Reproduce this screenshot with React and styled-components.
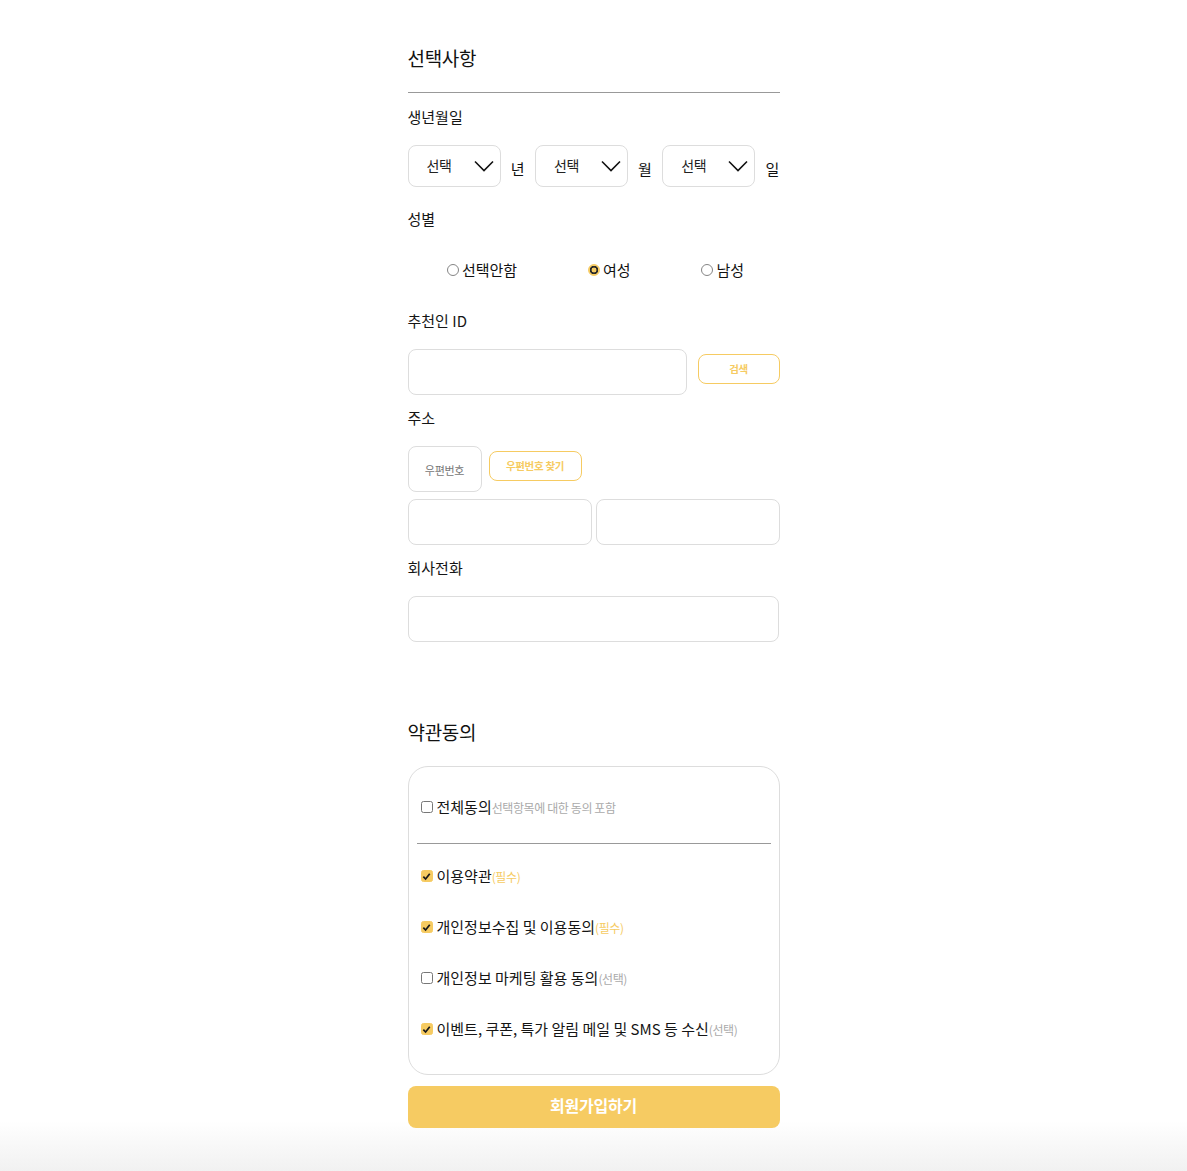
import styled, { createGlobalStyle } from "styled-components";

const YELLOW = "#F6CB62";

const GlobalStyle = createGlobalStyle`
	body {
		margin: 0;
		font-family: "Noto Sans CJK KR", "Noto Sans", sans-serif;
		color: #111;
		background: #fff;
	}
	* { box-sizing: border-box; }
`;

const Page = styled.div`
	min-height: 100vh;
	background: linear-gradient(to bottom, #fff 0, #fff calc(100% - 50px), #f1f1f1 100%);
`;

const Container = styled.div`
	width: 372px;
	margin: 0 auto;
	padding: 43px 0 43px;
	display: flex;
	flex-direction: column;
`;

const SectionTitle = styled.h2`
	margin: ${(p) => p.$mt || 0}px 0 0;
	font-size: 19px;
	font-weight: 400;
	letter-spacing: -0.3px;
	line-height: 30px;
	padding-bottom: ${(p) => (p.$line ? 19 : 0)}px;
	border-bottom: ${(p) => (p.$line ? "1px solid #999" : "none")};
`;

const Label = styled.div`
	margin-top: ${(p) => p.$mt || 0}px;
	font-size: 15px;
	line-height: 24px;
	color: #151515;
`;

const DateRow = styled.div`
	margin-top: 16px;
	display: flex;
	align-items: center;
	justify-content: space-between;
`;

const SelectBox = styled.div`
	width: 93px;
	height: 42px;
	border: 1px solid #ddd;
	border-radius: 8px;
	display: flex;
	align-items: center;
	justify-content: space-between;
	padding: 0 6px 2px 18px;
	font-size: 14px;
	letter-spacing: -0.3px;
	color: #222;

	svg {
		margin-top: 2px;
	}
`;

const Unit = styled.span`
	font-size: 15px;
	line-height: 24px;
	padding-top: 5px;
	width: 14px;
`;

const RadioRow = styled.div`
	padding: 27px 0 27px 4px;
	display: flex;
	justify-content: space-around;
	align-items: center;
`;

const RadioItem = styled.label`
	display: flex;
	align-items: center;
	gap: 3px;
	font-size: 15px;
	line-height: 24px;
`;

const RadioDot = styled.span`
	width: 12px;
	height: 12px;
	border-radius: 50%;
	border: 1px solid ${(p) => (p.$checked ? YELLOW : "#858585")};
	background: ${(p) =>
		p.$checked
			? `radial-gradient(circle, ${YELLOW} 0 2.2px, #2a2a2a 2.7px 4px, ${YELLOW} 4.5px)`
			: "#fff"};
`;

const FieldRow = styled.div`
	margin-top: ${(p) => p.$mt || 0}px;
	display: flex;
	align-items: flex-start;
	gap: ${(p) => p.$gap || 0}px;
`;

const TextInput = styled.div`
	flex: ${(p) => (p.$w ? "none" : 1)};
	width: ${(p) => (p.$w ? `${p.$w}px` : "auto")};
	height: 46px;
	border: 1px solid #ddd;
	border-radius: 8px;
	background: #fff;
`;

const PostBox = styled.div`
	width: 74px;
	height: 46px;
	border: 1px solid #ddd;
	border-radius: 8px;
	display: flex;
	align-items: center;
	justify-content: center;
	font-size: 11px;
	letter-spacing: -0.3px;
	color: #777;
	padding-top: 2px;
`;

const OutlineButton = styled.button`
	margin-top: 5px;
	width: ${(p) => p.$w}px;
	height: 30px;
	border: 1px solid ${YELLOW};
	border-radius: 8px;
	background: #fff;
	color: ${YELLOW};
	font-family: inherit;
	font-size: 10.5px;
	font-weight: 700;
	letter-spacing: -0.3px;
	padding: 0 0 2px;
`;

const AgreeBox = styled.div`
	margin-top: 19px;
	border: 1px solid #ddd;
	border-radius: 20px;
	padding: 28px 8px 33px;
`;

const AgreeRow = styled.label`
	height: 24px;
	display: flex;
	align-items: center;
	padding: 0 4px;
	font-size: 15px;
	line-height: 24px;
	color: #151515;
`;

const Divider = styled.div`
	margin: 24px 0 20px;
	height: 1px;
	background: #999;
`;

const AgreeList = styled.div`
	display: flex;
	flex-direction: column;
	gap: 27px;
`;

const CheckBox = styled.span`
	flex: none;
	width: 12px;
	height: 12px;
	margin-right: 4px;
	border-radius: 2.5px;
	border: 1px solid ${(p) => (p.$checked ? YELLOW : "#777")};
	background: ${(p) => (p.$checked ? YELLOW : "#fff")};
	display: flex;
	align-items: center;
	justify-content: center;
`;

const Note = styled.span`
	font-size: 12px;
	line-height: 24px;
	letter-spacing: -0.4px;
	color: ${(p) => (p.$tone === "req" ? YELLOW : "#aaa")};
	padding-top: 1px;
`;

const SubmitButton = styled.button`
	margin-top: 11px;
	height: 42px;
	border: none;
	border-radius: 8px;
	background: ${YELLOW};
	color: #fff;
	font-family: inherit;
	font-size: 16px;
	font-weight: 700;
	letter-spacing: -0.2px;
	padding: 0 0 5px;
`;

function Chevron() {
	return (
		<svg width='20' height='12' viewBox='0 0 20 12'>
			<polyline
				points='1,1.5 10,10.5 19,1.5'
				fill='none'
				stroke='#111'
				strokeWidth='1.6'
			/>
		</svg>
	);
}

function Check({ checked }) {
	return (
		<CheckBox $checked={checked}>
			{checked && (
				<svg width='9' height='9' viewBox='0 0 10 10'>
					<polyline
						points='1.5,5.2 4,7.8 8.6,2'
						fill='none'
						stroke='#1a1a1a'
						strokeWidth='1.9'
					/>
				</svg>
			)}
		</CheckBox>
	);
}

const terms = [
	{ text: "이용약관", note: "(필수)", tone: "req", checked: true },
	{ text: "개인정보수집 및 이용동의", note: "(필수)", tone: "req", checked: true },
	{ text: "개인정보 마케팅 활용 동의", note: "(선택)", tone: "opt", checked: false },
	{
		text: "이벤트, 쿠폰, 특가 알림 메일 및 SMS 등 수신",
		note: "(선택)",
		tone: "opt",
		checked: true,
	},
];

const genders = [
	{ label: "선택안함", checked: false },
	{ label: "여성", checked: true },
	{ label: "남성", checked: false },
];

export default function App() {
	return (
		<Page>
			<GlobalStyle />
			<Container>
				<SectionTitle $line>선택사항</SectionTitle>

				<Label $mt={12}>생년월일</Label>
				<DateRow>
					<SelectBox>
						선택
						<Chevron />
					</SelectBox>
					<Unit>년</Unit>
					<SelectBox>
						선택
						<Chevron />
					</SelectBox>
					<Unit>월</Unit>
					<SelectBox>
						선택
						<Chevron />
					</SelectBox>
					<Unit>일</Unit>
				</DateRow>

				<Label $mt={20}>성별</Label>
				<RadioRow>
					{genders.map((g) => (
						<RadioItem key={g.label}>
							<RadioDot $checked={g.checked} />
							{g.label}
						</RadioItem>
					))}
				</RadioRow>

				<Label>추천인 ID</Label>
				<FieldRow $mt={16} $gap={11}>
					<TextInput $w={279} />
					<OutlineButton $w={82}>검색</OutlineButton>
				</FieldRow>

				<Label $mt={11}>주소</Label>
				<FieldRow $mt={16} $gap={7}>
					<PostBox>우편번호</PostBox>
					<OutlineButton $w={93}>우편번호 찾기</OutlineButton>
				</FieldRow>
				<FieldRow $mt={7} $gap={4}>
					<TextInput />
					<TextInput />
				</FieldRow>

				<Label $mt={11}>회사전화</Label>
				<FieldRow $mt={16}>
					<TextInput $w={371} />
				</FieldRow>

				<SectionTitle $mt={75}>약관동의</SectionTitle>
				<AgreeBox>
					<AgreeRow>
						<Check checked={false} />
						전체동의
						<Note>선택항목에 대한 동의 포함</Note>
					</AgreeRow>
					<Divider />
					<AgreeList>
						{terms.map((t) => (
							<AgreeRow key={t.text}>
								<Check checked={t.checked} />
								{t.text}
								<Note $tone={t.tone}>{t.note}</Note>
							</AgreeRow>
						))}
					</AgreeList>
				</AgreeBox>

				<SubmitButton>회원가입하기</SubmitButton>
			</Container>
		</Page>
	);
}
